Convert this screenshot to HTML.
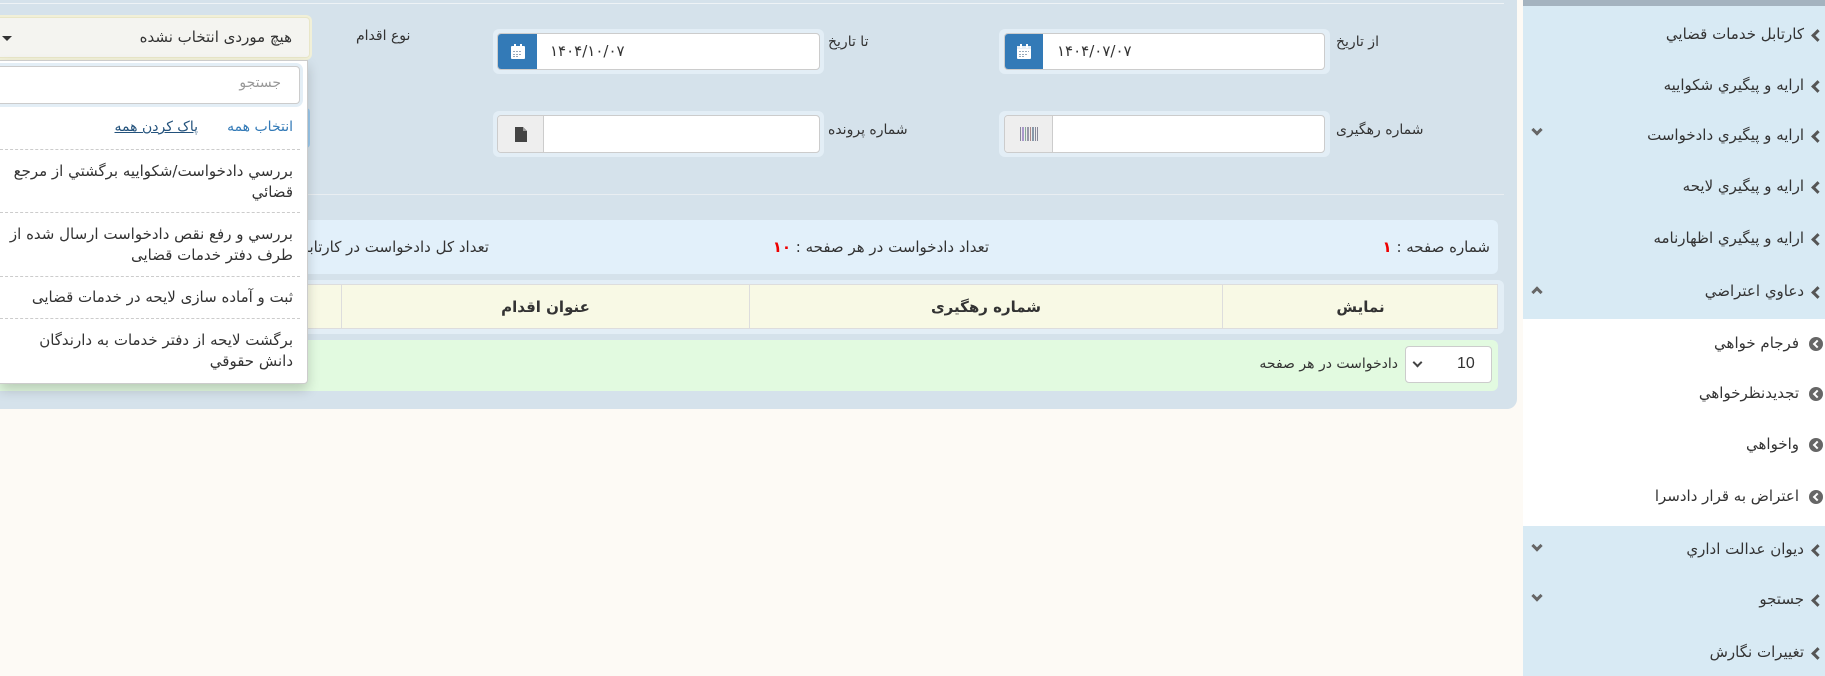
<!DOCTYPE html>
<html><head><meta charset="utf-8"><style>
*{box-sizing:border-box;margin:0;padding:0}
body{width:1825px;height:676px;overflow:hidden;background:#fdfaf5;font-family:"DejaVu Sans","Noto Sans CJK SC",sans-serif;font-size:15px;color:#333;position:relative}
.a{position:absolute}
.panel{left:0;top:0;width:1517px;height:409px;background:#d5e2eb;border-bottom-right-radius:10px}
.topline{left:0;top:3px;width:1504px;height:1px;background:#eef3f6}
.halo{background:#e3eef6;border-radius:6px}
.grp{background:#fff;border:1px solid #ccc;border-radius:4px;overflow:hidden}
.addon{position:absolute;left:0;top:0;bottom:0;display:flex;align-items:center;justify-content:center}
.blue{background:#337ab7}
.gray{background:#eee;border-right:1px solid #ccc}
.lbl{direction:rtl;white-space:nowrap;font-size:14px;color:#333}
.date{position:absolute;left:52px;top:8px;font-size:15px;color:#333}
.sb{left:1523px;top:0;width:302px;height:676px;background:#d8eaf4}
.sbitem{position:absolute;right:21px;direction:rtl;white-space:nowrap;font-size:15px;color:#333}
.chev{position:absolute;right:3px;width:9px;height:9px;border-left:3px solid #555;border-bottom:3px solid #555;transform:rotate(45deg)}
.dchev{position:absolute;left:10px;width:8px;height:8px;border-right:3px solid #666;border-bottom:3px solid #666;transform:rotate(45deg)}
.uchev{position:absolute;left:10px;width:8px;height:8px;border-left:3px solid #666;border-top:3px solid #666;transform:rotate(45deg)}
.circ{position:absolute;right:2px;width:14px;height:14px;border-radius:50%;background:#666}
.circ:after{content:"";position:absolute;left:5px;top:4px;width:4px;height:4px;border-left:2px solid #fff;border-bottom:2px solid #fff;transform:rotate(45deg)}
.th{position:absolute;top:0;height:44px;border-left:1px solid #ddd;display:flex;align-items:center;justify-content:center;font-weight:bold;font-size:15px;direction:rtl}
.dd{left:0;top:60px;width:308px;height:324px;background:#fff;border:1px solid #ccc;border-left:none;border-radius:0 0 4px 0;box-shadow:0 6px 12px rgba(0,0,0,.18)}
.item{position:absolute;right:14px;direction:rtl;text-align:right;font-size:15px;line-height:21px;color:#333;width:290px}
.sep{position:absolute;left:0;width:300px;border-top:1px dashed #ccc}
</style></head><body>
<div class="a panel"></div>
<div class="a topline"></div>

<!-- row1 -->
<div class="a halo" style="left:999px;top:29px;width:331px;height:45px"></div>
<div class="a grp" style="left:1004px;top:33px;width:321px;height:37px">
  <div class="addon blue" style="width:38px"><svg width="16" height="16" viewBox="0 0 16 16"><rect x="1" y="2" width="14" height="13" rx="1" fill="#fff"/><rect x="1" y="2" width="14" height="3" fill="#e8eef5"/><rect x="4" y="0" width="2" height="4" fill="#fff"/><rect x="10" y="0" width="2" height="4" fill="#fff"/><g fill="#9ab"><rect x="3" y="7" width="2" height="1"/><rect x="6" y="7" width="2" height="1"/><rect x="9" y="7" width="2" height="1"/><rect x="12" y="7" width="1" height="1"/><rect x="3" y="10" width="2" height="1"/><rect x="6" y="10" width="2" height="1"/><rect x="9" y="10" width="2" height="1"/><rect x="3" y="12" width="2" height="1"/><rect x="6" y="12" width="2" height="1"/></g></svg></div>
  <div class="date">۱۴۰۴/۰۷/۰۷</div>
</div>
<div class="a lbl" style="left:1336px;top:34px">از تاریخ</div>

<div class="a halo" style="left:493px;top:29px;width:331px;height:45px"></div>
<div class="a grp" style="left:497px;top:33px;width:323px;height:37px">
  <div class="addon blue" style="width:39px"><svg width="16" height="16" viewBox="0 0 16 16"><rect x="1" y="2" width="14" height="13" rx="1" fill="#fff"/><rect x="4" y="0" width="2" height="4" fill="#fff"/><rect x="10" y="0" width="2" height="4" fill="#fff"/><g fill="#9ab"><rect x="3" y="7" width="2" height="1"/><rect x="6" y="7" width="2" height="1"/><rect x="9" y="7" width="2" height="1"/><rect x="3" y="10" width="2" height="1"/><rect x="6" y="10" width="2" height="1"/><rect x="9" y="10" width="2" height="1"/><rect x="3" y="12" width="2" height="1"/><rect x="6" y="12" width="2" height="1"/></g></svg></div>
  <div class="date">۱۴۰۴/۱۰/۰۷</div>
</div>
<div class="a lbl" style="left:828px;top:34px">تا تاریخ</div>

<div class="a lbl" style="left:356px;top:28px">نوع اقدام</div>
<div class="a" style="left:0;top:17px;width:310px;height:41px;background:#f4f4f0;border:1px solid #e8e6c8;border-left:none;border-radius:0 4px 4px 0;box-shadow:0 0 0 2px #f1f0d8"></div>
<div class="a lbl" style="right:1533px;top:28px;font-size:15px">هیچ موردی انتخاب نشده</div>
<div class="a" style="left:2px;top:36px;width:0;height:0;border-left:5px solid transparent;border-right:5px solid transparent;border-top:5px solid #333"></div>

<!-- row2 -->
<div class="a halo" style="left:999px;top:111px;width:331px;height:46px"></div>
<div class="a grp" style="left:1004px;top:115px;width:321px;height:38px">
  <div class="addon gray" style="width:48px"><svg width="18" height="14"><g fill="#889"><rect x="0" y="0" width="1" height="14"/><rect x="2" y="0" width="2" height="14" fill="#a9c"/><rect x="5" y="0" width="1" height="14" fill="#8a9"/><rect x="7" y="0" width="2" height="14" fill="#99a"/><rect x="10" y="0" width="1" height="14" fill="#a88"/><rect x="12" y="0" width="2" height="14" fill="#89a"/><rect x="15" y="0" width="1" height="14"/><rect x="17" y="0" width="1" height="14"/></g></svg></div>
</div>
<div class="a lbl" style="left:1336px;top:122px">شماره رهگیری</div>

<div class="a halo" style="left:493px;top:111px;width:331px;height:46px"></div>
<div class="a grp" style="left:497px;top:115px;width:323px;height:38px">
  <div class="addon gray" style="width:46px"><svg width="12" height="15" viewBox="0 0 12 15"><path d="M0 0H8L12 4V15H0Z" fill="#444"/><path d="M8 0V4H12" fill="#999"/></svg></div>
</div>
<div class="a lbl" style="left:828px;top:122px">شماره پرونده</div>

<div class="a" style="left:0;top:194px;width:1504px;height:1px;background:#e9eef2"></div>

<!-- info bar -->
<div class="a" style="left:0;top:220px;width:1498px;height:54px;background:#e2f0fa;border-radius:0 6px 6px 0"></div>
<div class="a lbl" style="right:335px;top:238px;font-size:15px">شماره صفحه : <span style="color:#e00;font-weight:bold">۱</span></div>
<div class="a lbl" style="right:836px;top:238px;font-size:15px">تعداد دادخواست در هر صفحه : <span style="color:#e00;font-weight:bold">۱۰</span></div>
<div class="a lbl" style="right:1336px;top:238px;font-size:15px">تعداد کل دادخواست در کارتابل</div>

<!-- table header -->
<div class="a" style="left:0;top:280px;width:1504px;height:54px;background:#e3eef6;border-radius:0 6px 6px 0"></div>
<div class="a" style="left:0;top:284px;width:1498px;height:45px;background:#f8f9e5;border:1px solid #ddd;border-left:none">
  <div class="th" style="left:1222px;width:276px">نمایش</div>
  <div class="th" style="left:749px;width:473px">شماره رهگیری</div>
  <div class="th" style="left:341px;width:408px">عنوان اقدام</div>
</div>

<!-- green row -->
<div class="a" style="left:0;top:340px;width:1498px;height:51px;background:#e2fae0;border-radius:0 6px 6px 0"></div>
<div class="a" style="left:1405px;top:346px;width:87px;height:37px;background:#fff;border:1px solid #ccc;border-radius:4px"></div>
<div class="a" style="left:1457px;top:355px;font-family:'Liberation Sans',sans-serif;font-size:16px">10</div>
<div class="a" style="left:1414px;top:359px;width:7px;height:7px;border-right:2px solid #444;border-bottom:2px solid #444;transform:rotate(45deg)"></div>
<div class="a lbl" style="right:427px;top:356px">دادخواست در هر صفحه</div>

<!-- dropdown -->
<div class="a" style="left:300px;top:108px;width:10px;height:40px;border:2px solid #9ecaed;border-left:none;border-radius:0 4px 4px 0"></div>
<div class="a dd">
  <div class="a" style="left:0;top:5px;width:300px;height:38px;background:#fff;border:1px solid #ccc;border-left:none;border-radius:0 4px 4px 0;box-shadow:0 0 0 3px #e3eef6"></div>
  <div class="a lbl" style="right:26px;top:14px;color:#999">جستجو</div>
  <div class="a lbl" style="right:14px;top:58px;color:#337ab7">انتخاب همه</div>
  <div class="a lbl" style="right:109px;top:58px;color:#23527c;text-decoration:underline">پاک کردن همه</div>
  <div class="sep" style="top:88px"></div>
  <div class="item" style="top:100px">بررسي دادخواست/شکواييه برگشتي از مرجع قضائي</div>
  <div class="sep" style="top:151px"></div>
  <div class="item" style="top:163px">بررسي و رفع نقص دادخواست ارسال شده از طرف دفتر خدمات قضایی</div>
  <div class="sep" style="top:215px"></div>
  <div class="item" style="top:226px">ثبت و آماده سازی لایحه در خدمات قضایی</div>
  <div class="sep" style="top:257px"></div>
  <div class="item" style="top:269px">برگشت لایحه از دفتر خدمات به دارندگان دانش حقوقي</div>
</div>

<!-- sidebar -->
<div class="a sb">
  <div class="a" style="left:0;top:0;width:302px;height:6px;background:#a4b3bf"></div>
  <div class="a" style="left:0;top:319px;width:302px;height:207px;background:#fff"></div>
  <div class="sbitem" style="top:25px">کارتابل خدمات قضايي</div><div class="chev" style="top:31px"></div>
  <div class="sbitem" style="top:76px">ارايه و پيگيري شکواييه</div><div class="chev" style="top:82px"></div>
  <div class="sbitem" style="top:126px">ارايه و پيگيري دادخواست</div><div class="chev" style="top:132px"></div><div class="dchev" style="top:126px"></div>
  <div class="sbitem" style="top:177px">ارايه و پيگيري لايحه</div><div class="chev" style="top:183px"></div>
  <div class="sbitem" style="top:229px">ارايه و پيگيري اظهارنامه</div><div class="chev" style="top:235px"></div>
  <div class="sbitem" style="top:282px">دعاوي اعتراضي</div><div class="chev" style="top:288px"></div><div class="uchev" style="top:288px"></div>
  <div class="sbitem" style="top:334px;right:26px">فرجام خواهي</div><div class="circ" style="top:337px"></div>
  <div class="sbitem" style="top:384px;right:26px">تجديدنظرخواهي</div><div class="circ" style="top:387px"></div>
  <div class="sbitem" style="top:435px;right:26px">واخواهي</div><div class="circ" style="top:438px"></div>
  <div class="sbitem" style="top:487px;right:26px">اعتراض به قرار دادسرا</div><div class="circ" style="top:490px"></div>
  <div class="sbitem" style="top:540px">ديوان عدالت اداري</div><div class="chev" style="top:546px"></div><div class="dchev" style="top:542px"></div>
  <div class="sbitem" style="top:590px">جستجو</div><div class="chev" style="top:596px"></div><div class="dchev" style="top:592px"></div>
  <div class="sbitem" style="top:643px">تغييرات نگارش</div><div class="chev" style="top:649px"></div>
</div>
</body></html>
